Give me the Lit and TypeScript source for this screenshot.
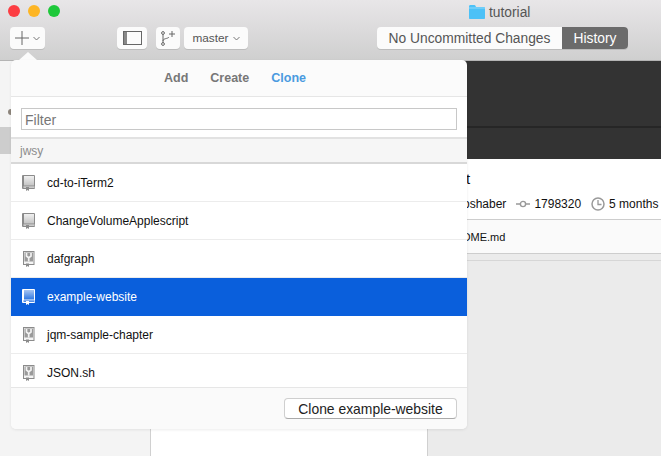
import { LitElement, html, css, svg } from "lit";
import { customElement } from "lit/decorators.js";

const repos = [
  { name: "cd-to-iTerm2", fork: false },
  { name: "ChangeVolumeApplescript", fork: false },
  { name: "dafgraph", fork: true },
  { name: "example-website", fork: false, selected: true },
  { name: "jqm-sample-chapter", fork: true },
  { name: "JSON.sh", fork: true },
];

function bookIcon(fork: boolean, selected: boolean) {
  const c = selected ? "#ffffff" : "#8b8b8b";
  const id = selected ? "pageSel" : "pagePlain";
  return html`<svg class="book" width="13" height="16" viewBox="0 0 13 16">
    <defs>
      <linearGradient id="pageSel" x1="0" y1="0" x2="0" y2="1">
        <stop offset="0" stop-color="#a9c6f2"></stop>
        <stop offset="1" stop-color="#2f78e2"></stop>
      </linearGradient>
      <linearGradient id="pagePlain" x1="0" y1="0" x2="0" y2="1">
        <stop offset="0" stop-color="#f0f0f0"></stop>
        <stop offset="1" stop-color="#c4c4c4"></stop>
      </linearGradient>
    </defs>
    ${fork
      ? svg`<rect x="1.5" y="0.5" width="10.5" height="13" fill="#f4f4f4" stroke="${c}"></rect>
           <rect x="2.5" y="1.5" width="8.5" height="9" fill="#9a9a9a"></rect>
           <path d="M4.5 2v3l2.2 1.8v3.7M9 2v3L6.7 6.8" fill="none" stroke="#f2f2f2" stroke-width="1.7"></path>
           <path d="M4 12.5h3v3.5l-1.5-1-1.5 1z" fill="${c}"></path>`
      : svg`<path d="M1 0h11a1 1 0 0 1 1 1v12a1 1 0 0 1-1 1H1a1 1 0 0 1-1-1V1a1 1 0 0 1 1-1z" fill="${c}"></path>
           <rect x="2" y="1" width="10" height="9.5" fill="url(#${id})"></rect>
           <rect x="1.5" y="11.5" width="11" height="1.2" fill="${selected ? "#0a5fdc" : "#e6e6e6"}"></rect>
           <path d="M4 12h3v4l-1.5-1-1.5 1z" fill="${c}"></path>`}
  </svg>`;
}

@customElement("app-root")
export class AppRoot extends LitElement {
  static styles = css`
    :host {
      display: block;
      position: relative;
      width: 661px;
      height: 456px;
      overflow: hidden;
      font-family: "Liberation Sans", Arial, sans-serif;
      font-size: 12px;
      color: #111;
      background: #ebebeb;
    }
    .titlebar {
      height: 61px;
      box-sizing: border-box;
      background: linear-gradient(#e8e6e8, #cfcfcf);
      border-bottom: 1px solid #b4b4b4;
      display: flex;
      flex-direction: column;
    }
    .top {
      height: 27px;
      display: flex;
      align-items: flex-start;
      padding: 5px 0 0 8px;
      box-sizing: border-box;
    }
    .light {
      width: 12px;
      height: 12px;
      border-radius: 50%;
      margin-right: 8px;
    }
    .red { background: #fc3d43; }
    .yellow { background: #fdb524; }
    .green { background: #1ec83a; }
    .title {
      margin-left: 401px;
      display: flex;
      align-items: center;
      gap: 4px;
      font-size: 13.8px;
      color: #555;
      height: 14px;
    }
    .toolbar {
      height: 22px;
      display: flex;
      align-items: stretch;
      padding-left: 10px;
    }
    .btn {
      background: #fbfbfb;
      border-radius: 4px;
      box-shadow: 0 1px 0 #bcbcbc;
      display: flex;
      align-items: center;
      justify-content: center;
      box-sizing: border-box;
      color: #555;
    }
    .plus { width: 35px; gap: 4px; margin-right: 72px; }
    .sidebtn { width: 30px; margin-right: 9px; }
    .branchbtn { width: 24px; margin-right: 4px; }
    .master { width: 64px; gap: 4px; font-size: 11.8px; margin-right: 129px; }
    .seg {
      width: 251px;
      display: flex;
      background: #fbfbfb;
      border-radius: 4px;
      box-shadow: 0 1px 0 #bcbcbc;
      overflow: hidden;
      font-size: 13.8px;
    }
    .seg .a {
      width: 185px;
      display: flex;
      align-items: center;
      justify-content: center;
      color: #555;
    }
    .seg .b {
      flex: 1;
      background: #6b6b6b;
      color: #fff;
      display: flex;
      align-items: center;
      justify-content: center;
    }
    .body {
      height: 395px;
      display: flex;
    }
    .sidebar {
      width: 151px;
      box-sizing: border-box;
      background: #f4f4f4;
      border-right: 1px solid #d0d0d0;
      display: flex;
      flex-direction: column;
    }
    .mark {
      width: 6px;
      height: 6px;
      border-radius: 50%;
      background: #8d857c;
      margin: 48px 0 0 8px;
    }
    .sel {
      height: 27px;
      background: #cdcdcd;
      margin-top: 12px;
    }
    .main {
      flex: 1;
      display: flex;
      flex-direction: column;
      min-width: 0;
    }
    .dark {
      height: 98px;
      background: #333;
      box-sizing: border-box;
      padding-top: 65px;
      flex: none;
    }
    .dark div {
      height: 2px;
      background: #262626;
    }
    .info {
      height: 60px;
      flex: none;
      box-sizing: border-box;
      background: #fff;
      padding: 11px 0 0 312px;
      white-space: nowrap;
    }
    .commit {
      font-size: 15px;
      line-height: 17px;
      margin-left: 3px;
    }
    .meta {
      display: flex;
      align-items: center;
      margin-top: 9px;
      font-size: 12px;
      height: 16px;
    }
    .meta span { display: block; }
    .author { margin-right: 10px; }
    .meta svg { margin-right: 4px; flex: none; }
    .sha { margin-right: 10px; }
    .file {
      height: 35px;
      flex: none;
      box-sizing: border-box;
      background: #fafafa;
      border-top: 1px solid #cdcdcd;
      border-bottom: 1px solid #cdcdcd;
      padding-left: 311px;
      display: flex;
      align-items: center;
      font-size: 11px;
    }
    .gap {
      height: 6px;
      flex: none;
      border-bottom: 1px solid #d6d6d6;
    }
    .diff {
      flex: 1;
      width: 277px;
      box-sizing: border-box;
      background: #fff;
      border-right: 1px solid #d0d0d0;
    }
    .arrow {
      position: absolute;
      left: 19px;
      top: 52px;
      width: 0;
      height: 0;
      border-left: 9px solid transparent;
      border-right: 9px solid transparent;
      border-bottom: 8px solid #fbfbfb;
    }
    .popover {
      position: absolute;
      left: 11px;
      top: 60px;
      width: 456px;
      height: 369px;
      background: #fbfbfb;
      border-radius: 5px;
      display: flex;
      flex-direction: column;
      overflow: hidden;
      box-shadow: 0 1px 3px rgba(0, 0, 0, 0.08);
    }
    .tabs {
      height: 37px;
      flex: none;
      box-sizing: border-box;
      border-bottom: 1px solid #e6e6e6;
      display: flex;
      align-items: center;
      justify-content: center;
      gap: 22px;
      padding-right: 8px;
      font-weight: bold;
      font-size: 12.5px;
      color: #777;
    }
    .tabs .on { color: #4a9ae0; }
    .filterwrap {
      height: 42px;
      flex: none;
      box-sizing: border-box;
      background: #fff;
      padding: 11px 10px 0;
      border-bottom: 2px solid #e2e2e2;
    }
    .filter {
      height: 22px;
      box-sizing: border-box;
      border: 1px solid #c8c8c8;
      background: #fff;
      display: flex;
      align-items: center;
      padding: 1px 0 0 3px;
      font-size: 14px;
      color: #777;
    }
    .group {
      height: 25px;
      flex: none;
      box-sizing: border-box;
      background: #f6f6f6;
      border-bottom: 2px solid #d8d8d8;
      padding-left: 9px;
      display: flex;
      align-items: center;
      font-size: 12px;
      color: #8c8c8c;
    }
    .list {
      flex: 1;
      min-height: 0;
      overflow: hidden;
      background: #fff;
      border-bottom: 1px solid #e6e6e6;
    }
    .row {
      height: 38px;
      box-sizing: border-box;
      border-bottom: 1px solid #ececec;
      display: flex;
      align-items: center;
      padding-left: 11px;
      color: #111;
    }
    .row.selected {
      background: #0a5fdc;
      color: #fff;
      border-bottom-color: #0a5fdc;
    }
    .book { flex: none; margin-right: 12px; margin-top: 1px; }
    .foot {
      height: 41px;
      flex: none;
      display: flex;
      align-items: center;
      justify-content: flex-end;
      padding-right: 10px;
      background: #fafafa;
    }
    .clone {
      width: 173px;
      height: 21px;
      box-sizing: border-box;
      background: #fff;
      border: 1px solid #cfcfcf;
      border-bottom-color: #aaa;
      border-radius: 4px;
      display: flex;
      align-items: center;
      justify-content: center;
      font-size: 13.9px;
      color: #222;
    }
  `;

  render() {
    return html`
      <div class="titlebar">
        <div class="top">
          <div class="light red"></div>
          <div class="light yellow"></div>
          <div class="light green"></div>
          <div class="title">
            <svg width="16" height="14" viewBox="0 0 16 14">
              <path d="M0 1.5C0 .7.6 0 1.3 0h4c.6 0 1 .3 1.3 1L7 2h8c.6 0 1 .4 1 1v10c0 .6-.4 1-1 1H1c-.6 0-1-.4-1-1z" fill="#4cc1f7"></path>
              <rect x="0" y="2.5" width="16" height="1" fill="#8ddafb"></rect>
            </svg>
            <span>tutorial</span>
          </div>
        </div>
        <div class="toolbar">
          <div class="btn plus">
            <svg width="14" height="14" viewBox="0 0 14 14"><path d="M7 0v14M0 7h14" stroke="#666" stroke-width="1" fill="none"></path></svg>
            <svg width="7" height="5" viewBox="0 0 7 5"><path d="M.5 1l3 3 3-3" stroke="#777" fill="none"></path></svg>
          </div>
          <div class="btn sidebtn">
            <svg width="19" height="14" viewBox="0 0 19 14"><rect x=".5" y=".5" width="18" height="13" fill="none" stroke="#666"></rect><rect x="1" y="1" width="3" height="12" fill="#888"></rect></svg>
          </div>
          <div class="btn branchbtn">
            <svg width="16" height="15" viewBox="0 0 16 15">
              <path d="M3 3v9M3 10c0-3 5-2 6-4" stroke="#666" fill="none"></path>
              <circle cx="3" cy="2" r="1.4" fill="none" stroke="#666"></circle>
              <circle cx="3" cy="13" r="1.4" fill="none" stroke="#666"></circle>
              <path d="M12 0v6M9 3h6" stroke="#666" fill="none"></path>
            </svg>
          </div>
          <div class="btn master">
            <span>master</span>
            <svg width="7" height="5" viewBox="0 0 7 5"><path d="M.5 1l3 3 3-3" stroke="#777" fill="none"></path></svg>
          </div>
          <div class="seg">
            <div class="a">No Uncommitted Changes</div>
            <div class="b">History</div>
          </div>
        </div>
      </div>
      <div class="body">
        <div class="sidebar">
          <div class="mark"></div>
          <div class="sel"></div>
        </div>
        <div class="main">
          <div class="dark"><div></div></div>
          <div class="info">
            <div class="commit">t</div>
            <div class="meta">
              <span class="author">oshaber</span>
              <svg width="14" height="8" viewBox="0 0 14 8"><path d="M0 4h4M10 4h4" stroke="#999" stroke-width="1.5"></path><circle cx="7" cy="4" r="2.6" fill="none" stroke="#999" stroke-width="1.4"></circle></svg>
              <span class="sha">1798320</span>
              <svg width="14" height="14" viewBox="0 0 14 14"><circle cx="7" cy="7" r="6" fill="none" stroke="#999" stroke-width="1.5"></circle><path d="M7 3v4.5h3.5" fill="none" stroke="#999" stroke-width="1.3"></path></svg>
              <span>5 months</span>
            </div>
          </div>
          <div class="file">OME.md</div>
          <div class="gap"></div>
          <div class="diff"></div>
        </div>
      </div>
      <div class="arrow"></div>
      <div class="popover">
        <div class="tabs"><span>Add</span><span>Create</span><span class="on">Clone</span></div>
        <div class="filterwrap"><div class="filter">Filter</div></div>
        <div class="group">jwsy</div>
        <div class="list">
          ${repos.map(
            (r) => html`<div class="row ${r.selected ? "selected" : ""}">
              ${bookIcon(r.fork, !!r.selected)}<span>${r.name}</span>
            </div>`
          )}
        </div>
        <div class="foot"><div class="clone">Clone example-website</div></div>
      </div>
    `;
  }
}
